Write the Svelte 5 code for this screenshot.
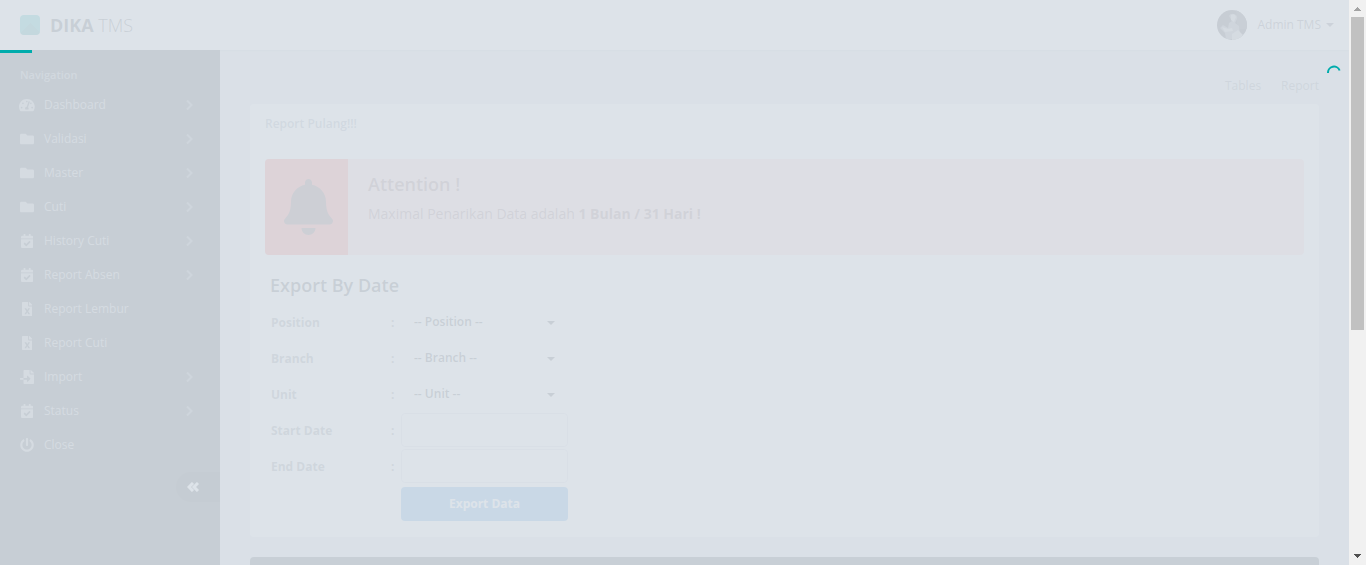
<script>
  const icons = {
    gauge: { w: 576, d: 'M288 32C128.94 32 0 160.94 0 320c0 52.8 14.25 102.26 39.06 144.8 5.61 9.62 16.3 15.2 27.44 15.2h443c11.14 0 21.83-5.58 27.44-15.2C561.75 422.26 576 372.8 576 320c0-159.06-128.94-288-288-288zm0 64c14.71 0 26.58 10.13 30.32 23.65-1.11 2.26-2.64 4.23-3.45 6.67l-9.22 27.67c-5.13 3.49-10.97 6.01-17.64 6.01-17.67 0-32-14.33-32-32S270.33 96 288 96zM96 384c-17.67 0-32-14.33-32-32s14.33-32 32-32 32 14.33 32 32-14.33 32-32 32zm48-160c-17.67 0-32-14.33-32-32s14.33-32 32-32 32 14.33 32 32-14.33 32-32 32zm246.77-72.41l-61.33 184C343.13 347.33 352 364.54 352 384c0 11.72-3.38 22.55-8.88 32H232.88c-5.5-9.45-8.88-20.28-8.88-32 0-33.94 26.5-61.43 59.9-63.59l61.34-184.01c4.17-12.56 17.73-19.45 30.36-15.17 12.57 4.19 19.35 17.79 15.17 30.36zm14.66 57.2l15.52-46.55c3.47-1.29 7.13-2.23 11.05-2.23 17.67 0 32 14.33 32 32s-14.33 32-32 32c-11.38-.01-20.89-6.28-26.57-15.22zM480 384c-17.67 0-32-14.33-32-32s14.33-32 32-32 32 14.33 32 32-14.33 32-32 32z' },
    folder: { w: 512, d: 'M464 128H272l-64-64H48C21.49 64 0 85.49 0 112v288c0 26.51 21.49 48 48 48h416c26.51 0 48-21.49 48-48V176c0-26.51-21.49-48-48-48z' },
    calendar: { w: 448, d: 'M436 160H12c-6.627 0-12-5.373-12-12v-36c0-26.51 21.49-48 48-48h48V12c0-6.627 5.373-12 12-12h40c6.627 0 12 5.373 12 12v52h128V12c0-6.627 5.373-12 12-12h40c6.627 0 12 5.373 12 12v52h48c26.51 0 48 21.49 48 48v36c0 6.627-5.373 12-12 12zM12 192h424c6.627 0 12 5.373 12 12v260c0 26.51-21.49 48-48 48H48c-26.51 0-48-21.49-48-48V204c0-6.627 5.373-12 12-12zm333.296 95.947l-28.169-28.398c-4.667-4.705-12.265-4.736-16.97-.068L194.12 364.665l-45.98-46.352c-4.667-4.705-12.266-4.736-16.971-.068l-28.397 28.17c-4.705 4.667-4.736 12.265-.068 16.97l82.601 83.269c4.667 4.705 12.265 4.736 16.97.068l142.953-141.805c4.705-4.667 4.736-12.265.068-16.97z' },
    excel: { w: 384, d: 'M224 136V0H24C10.7 0 0 10.7 0 24v464c0 13.3 10.7 24 24 24h336c13.3 0 24-10.7 24-24V160H248c-13.2 0-24-10.8-24-24zm60.1 106.5L224 336l60.1 93.5c5.1 8-.6 18.5-10.1 18.5h-34.9c-4.4 0-8.5-2.4-10.6-6.3C208.9 405.5 192 373 192 373c-6.4 14.8-10 20-36.6 68.8-2.1 3.9-6.1 6.3-10.5 6.3H110c-9.5 0-15.2-10.5-10.1-18.5l60.3-93.5-60.3-93.5c-5.2-8 .6-18.5 10.1-18.5h34.8c4.4 0 8.5 2.4 10.6 6.3 26.1 48.8 20 33.6 36.6 68.5 0 0 6.1-11.7 36.6-68.5 2.1-3.9 6.2-6.3 10.6-6.3H274c9.5-.1 15.2 10.4 10.1 18.4zM384 121.9v6.1H256V0h6.1c6.4 0 12.5 2.5 17 7l97.9 98c4.5 4.5 7 10.6 7 16.9z' },
    fileImport: { w: 512, d: 'M16 288c-8.8 0-16 7.2-16 16v32c0 8.8 7.2 16 16 16h112v-64zm489-183L407.1 7c-4.5-4.5-10.6-7-17-7H384v128h128v-6.1c0-6.3-2.5-12.4-7-16.9zm-153 31V0H152c-13.3 0-24 10.7-24 24v264h128v-65.2c0-14.3 17.3-21.4 27.4-11.3L379 308c6.6 6.7 6.6 17.4 0 24l-95.7 96.4c-10.1 10.1-27.4 3-27.4-11.3V352H128v136c0 13.3 10.7 24 24 24h336c13.3 0 24-10.7 24-24V160H376c-13.2 0-24-10.8-24-24z' },
    power: { w: 512, d: 'M400 54.1c63 45 104 118.6 104 201.9 0 136.8-110.8 247.7-247.5 248C120 504.3 8.2 393 8 256.4 7.9 173.1 48.9 99.3 111.8 54.2c11.7-8.3 28-4.8 35 7.7L162.6 90c5.9 10.5 3.1 23.8-6.6 31-41.5 30.8-68 79.6-68 134.9-.1 92.3 74.5 168.1 168 168.1 91.6 0 168.6-74.2 168-169.1-.3-51.8-24.7-101.8-68.1-134-9.7-7.2-12.4-20.5-6.5-30.9l15.8-28.1c7-12.4 23.2-16.1 34.8-7.8zM296 264V24c0-13.3-10.7-24-24-24h-32c-13.3 0-24 10.7-24 24v240c0 13.3 10.7 24 24 24h32c13.3 0 24-10.7 24-24z' }
  };
  const menu = [
    ['Dashboard', 'gauge', true],
    ['Validasi', 'folder', true],
    ['Master', 'folder', true],
    ['Cuti', 'folder', true],
    ['History Cuti', 'calendar', true],
    ['Report Absen', 'calendar', true],
    ['Report Lembur', 'excel', false],
    ['Report Cuti', 'excel', false],
    ['Import', 'fileImport', true],
    ['Status', 'calendar', true],
    ['Close', 'power', false]
  ];
  const selects = ['Position', 'Branch', 'Unit'];
  const dates = ['Start Date', 'End Date'];
</script>

<div class="window">
  <div class="page">
    <header>
      <a class="brand" href="#home"><span class="logo"></span><span><b>DIKA</b> TMS</span></a>
      <button class="user" type="button">
        <svg class="avatar" viewBox="0 0 30 30" aria-hidden="true">
          <defs><clipPath id="face"><circle cx="15" cy="15" r="15" /></clipPath></defs>
          <g clip-path="url(#face)">
            <rect width="30" height="30" fill="#20202c" />
            <path d="M19 0h11v19h-7l-3-5z" fill="#34343f" />
            <path d="M12 6q1-3 5-2 4 1 3 5l-2 4 4 3 1 8-4 5H9l-1-6-5-5 3-3 5 3 1-5 3-2z" fill="#71717a" />
            <path d="M14 5q4-2 5 2l-2 5-3-2zM5 17l6 2 4-1 1 3-8 1zM15 24l6-4 5 5-5 5h-6z" fill="#aaaab0" />
          </g>
        </svg>
        <span>Admin TMS</span><span class="caret"></span>
      </button>
    </header>
    <div class="columns">
      <nav>
        <div class="nav-title">Navigation</div>
        <ul>
          {#each menu as [name, icon, sub]}
            <li><a href="#{icon}">
              <span class="icon"><svg viewBox="0 0 {icons[icon].w} 512" height="14" aria-hidden="true"><path d={icons[icon].d} /></svg></span>
              <span>{name}</span>
              {#if sub}<svg class="arrow" viewBox="0 0 8 12" aria-hidden="true"><path d="M1 1.5l4.500 4.500L1 10.500" /></svg>{/if}
            </a></li>
          {/each}
        </ul>
        <button class="minify" type="button" aria-label="Collapse menu">
          <svg viewBox="0 0 12 10" aria-hidden="true"><path d="M6 1L2 5l4 4M11 1L7 5l4 4" /></svg>
        </button>
      </nav>
      <main>
        <ol class="breadcrumb">
          <li><a href="#tables">Tables</a></li>
          <li><a href="#report">Report</a></li>
        </ol>
        <section class="panel">
          <h4 class="panel-title">Report Pulang!!!</h4>
          <div class="panel-body">
            <div class="note">
              <div class="note-icon">
                <svg viewBox="0 0 448 512" aria-hidden="true"><path d="M224 512c35.32 0 63.97-28.65 63.97-64H160.03c0 35.35 28.65 64 63.97 64zm215.39-149.71c-19.32-20.76-55.47-51.99-55.47-154.29 0-77.7-54.48-139.9-127.94-155.16V32c0-17.67-14.32-32-31.98-32s-31.98 14.33-31.98 32v20.84C118.56 68.1 64.08 130.3 64.08 208c0 102.3-36.15 133.53-55.47 154.29-6 6.45-8.66 14.16-8.61 21.71.11 16.4 12.98 32 32.1 32h383.8c19.12 0 32-15.6 32.1-32 .05-7.55-2.61-15.27-8.61-21.71z" /></svg>
              </div>
              <div class="note-text">
                <h4>Attention !</h4>
                <p>Maximal Penarikan Data adalah <b>1 Bulan / 31 Hari !</b></p>
              </div>
            </div>
            <h4 class="form-title">Export By Date</h4>
            <form>
              {#each selects as name}
                <label for={name}>{name}</label><b>:</b>
                <div class="select"><select id={name}><option>-- {name} --</option></select><span class="caret"></span></div>
              {/each}
              {#each dates as name}
                <label for={name}>{name}</label><b>:</b>
                <input id={name} type="text" />
              {/each}
              <button class="export" type="button">Export Data</button>
            </form>
          </div>
        </section>
        <section class="panel next"></section>
      </main>
    </div>
    <div class="veil"></div>
    <div class="progress"></div>
    <svg class="spinner" viewBox="0 0 14 14" aria-hidden="true"><path d="M1 8A6 6 0 0 1 12.6 5.5" /></svg>
  </div>
  <div class="scrollbar" aria-hidden="true">
    <svg viewBox="0 0 17 17"><path d="M5 11h7v-1h-1V9h-1V8H9V7H8v1H7v1H6v1H5z" fill="#a3a3a3" /></svg>
    <div class="track"><div class="thumb"></div></div>
    <svg viewBox="0 0 17 17"><path d="M5 6h7v1h-1v1h-1v1H9v1H8V9H7V8H6V7H5z" fill="#505050" /></svg>
  </div>
</div>

<style>
  :global(body) { margin: 0; }
  * { box-sizing: border-box; }
  .window {
    display: flex;
    height: 100vh;
    overflow: hidden;
    font: 12px/18px "Open Sans", sans-serif;
    color: #333;
  }
  button, select, input { font: inherit; color: inherit; border: 0; margin: 0; padding: 0; background: none; }
  h4, p, ul, ol { margin: 0; padding: 0; list-style: none; }
  a { color: inherit; text-decoration: none; }
  .page { position: relative; flex: 1; min-width: 0; overflow: hidden; display: flex; flex-direction: column; background: #d9e0e7; }
  header {
    flex: none;
    height: 50px;
    padding: 0 15px 0 20px;
    display: flex;
    align-items: center;
    justify-content: space-between;
    background: #fff;
    box-shadow: 0 0 2px rgba(0, 0, 0, 0.3);
  }
  .brand { display: flex; align-items: center; gap: 10px; font-size: 18px; line-height: 30px; font-weight: 300; color: #2d353c; }
  .brand b { font-weight: 700; }
  .logo { width: 20px; height: 20px; border-radius: 4px; background: conic-gradient(from 135deg at 50% 40%, #008a8a 90deg, #00acac 0); }
  .user { display: flex; align-items: center; color: #585663; }
  .avatar { width: 30px; height: 30px; margin-right: 10px; }
  .caret { border: 4px solid transparent; border-top-color: currentColor; border-bottom: 0; margin-left: 5px; }
  .columns { flex: 1; min-height: 0; display: flex; }
  nav { flex: none; width: 220px; padding-top: 15px; background: #232b32; color: #a8acb1; }
  .nav-title { padding: 0 20px; margin-bottom: 3px; font-size: 11px; line-height: 20px; font-weight: 600; color: #889097; }
  li a { display: flex; align-items: center; }
  nav li a { height: 34px; padding: 0 26px 0 20px; }
  .icon { width: 14px; margin-right: 10px; display: flex; justify-content: center; }
  .icon svg { flex: none; fill: currentColor; }
  .arrow { width: 8px; height: 12px; margin-left: auto; fill: none; stroke: #6b747c; stroke-width: 2; }
  .minify { display: flex; align-items: center; width: 44px; height: 30px; margin: 10px 0 0 auto; padding-left: 11px; border-radius: 20px 0 0 20px; background: #121a20; }
  .minify svg { width: 12px; height: 10px; fill: none; stroke: #fff; stroke-width: 3; }
  main { flex: 1; min-width: 0; overflow: hidden; padding: 26px 30px 0; }
  .breadcrumb { display: flex; justify-content: flex-end; gap: 20px; line-height: 20px; margin-bottom: 8px; color: #6f7680; }
  .panel { background: #fff; border-radius: 4px; margin-bottom: 20px; }
  .panel-title { padding: 10px 15px; font-size: 12px; line-height: 20px; font-weight: 600; color: #8293a4; }
  .panel-body { padding: 15px 15px 18px; }
  .next { height: 40px; background: #2d353c; }
  .note { display: flex; height: 96px; margin-bottom: 20px; border-radius: 4px; overflow: hidden; background: #ffcdcb; color: #805058; }
  .note-icon { display: flex; align-items: center; justify-content: center; width: 83px; padding-left: 3px; background: #ff5b57; }
  .note-icon svg { width: 49px; height: 56px; fill: #5c3838; }
  .note-text { padding: 15px 20px; }
  .note-text h4 { font-size: 18px; line-height: 20px; font-weight: 600; margin-bottom: 10px; }
  .note-text p { font-size: 14px; line-height: 20px; }
  .form-title { padding-left: 5px; margin-bottom: 10px; font-size: 18px; line-height: 20px; font-weight: 600; color: #2d353c; }
  form { display: grid; grid-template-columns: 120px 10px 167px; grid-auto-rows: 34px; row-gap: 2px; align-items: center; padding-left: 6px; }
  label, form b { padding-top: 2px; font-weight: 700; color: #707880; }
  .select { position: relative; height: 34px; }
  select { width: 100%; height: 34px; padding: 0 30px 0 13px; appearance: none; font-weight: 600; color: #2d353c; }
  .select .caret { position: absolute; right: 13px; top: 16px; color: #2d353c; pointer-events: none; }
  input { width: 100%; height: 34px; padding: 0 12px; border: 1px solid #d3d8de; border-radius: 4px; }
  .export { grid-column: 3; height: 34px; margin-top: 4px; border-radius: 4px; background: #348fe2; color: #fff; font-weight: 700; }
  .veil { position: absolute; inset: 0; background: rgba(217, 224, 231, 0.9); pointer-events: none; }
  .progress { position: absolute; left: 0; top: 50px; width: 32px; height: 3px; background: #00acac; }
  .spinner { position: absolute; right: 8px; top: 65px; width: 14px; height: 14px; fill: none; stroke: #00acac; stroke-width: 2; }
  .scrollbar { flex: none; width: 17px; display: flex; flex-direction: column; background: #f1f1f1; }
  .scrollbar svg { width: 17px; height: 17px; }
  .track { flex: 1; padding: 0 2px; }
  .thumb { height: 59%; background: #c1c1c1; }
</style>
